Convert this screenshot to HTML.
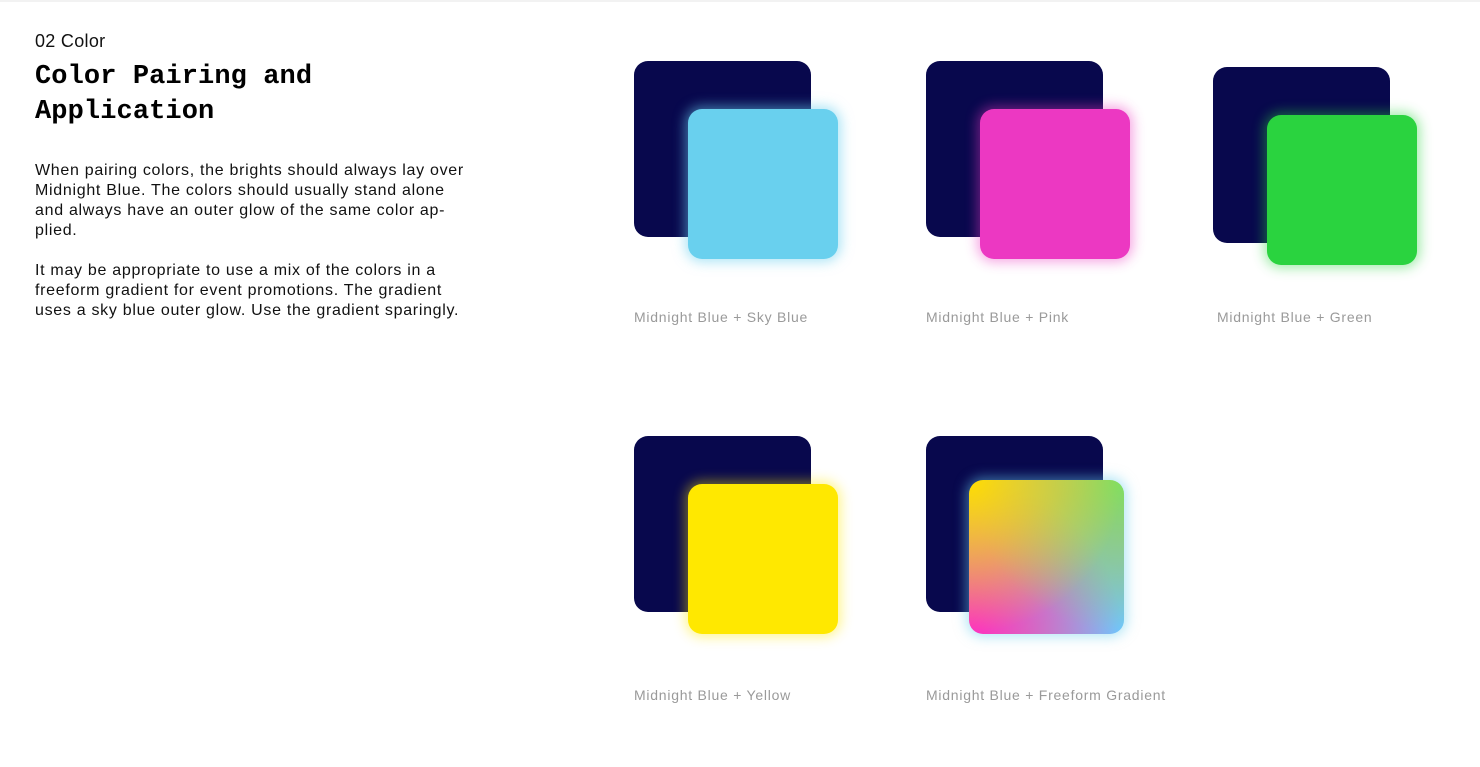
<!DOCTYPE html>
<html><head><style>
html,body{margin:0;padding:0;background:#fff;width:1480px;height:767px;overflow:hidden;position:relative;font-family:"Liberation Sans",sans-serif}
.top{position:absolute;left:0;top:0;width:1480px;height:2px;background:#f2f2f2}
.sub{position:absolute;left:35px;top:31px;font-size:18px;color:#111;letter-spacing:0.3px}
h1{position:absolute;left:35px;top:60px;margin:0;font-family:"Liberation Mono",monospace;font-weight:bold;font-size:27px;line-height:35px;color:#000;letter-spacing:0.1px}
.p{position:absolute;left:35px;white-space:nowrap;font-size:16px;line-height:20px;color:#111;letter-spacing:0.7px}
.d{position:absolute;width:177px;height:176px;border-radius:14px;background:#08084d}
.b{position:absolute;width:150px;height:150px;border-radius:14px}
.l{position:absolute;font-size:14px;color:#9a9a9a;letter-spacing:0.75px}
</style></head><body>
<div class="top"></div>
<div class="sub">02 Color</div>
<h1>Color Pairing and<br>Application</h1>
<div class="p" style="top:161px">When pairing colors, the brights should always lay over<br>Midnight Blue. The colors should usually stand alone<br>and always have an outer glow of the same color ap-<br>plied.</div>
<div class="p" style="top:261px">It may be appropriate to use a mix of the colors in a<br>freeform gradient for event promotions. The gradient<br>uses a sky blue outer glow. Use the gradient sparingly.</div>

<div class="d" style="left:634px;top:61px"></div>
<div class="b" style="left:688px;top:109px;background:#69d0ee;box-shadow:0 0 12px 3px rgba(105,208,238,.55)"></div>
<div class="l" style="left:634px;top:309px">Midnight Blue + Sky Blue</div>

<div class="d" style="left:926px;top:61px"></div>
<div class="b" style="left:980px;top:109px;background:#ec38c2;box-shadow:0 0 12px 3px rgba(236,56,194,.45)"></div>
<div class="l" style="left:926px;top:309px">Midnight Blue + Pink</div>

<div class="d" style="left:1213px;top:67px"></div>
<div class="b" style="left:1267px;top:115px;background:#2ad33f;box-shadow:0 0 12px 3px rgba(42,211,63,.45)"></div>
<div class="l" style="left:1217px;top:309px">Midnight Blue + Green</div>

<div class="d" style="left:634px;top:436px"></div>
<div class="b" style="left:688px;top:484px;background:#ffe800;box-shadow:0 0 12px 3px rgba(255,232,0,.45)"></div>
<div class="l" style="left:634px;top:687px">Midnight Blue + Yellow</div>

<div class="d" style="left:926px;top:436px"></div>
<div class="b" style="left:969px;top:480px;width:155px;height:154px;background:radial-gradient(ellipse at 0% 0%,#ffdd00 0%,rgba(255,210,20,0) 70%),radial-gradient(ellipse at 100% 0%,#7ee060 0%,rgba(126,224,96,0) 70%),radial-gradient(ellipse at 0% 100%,#ff30c0 0%,rgba(255,48,192,0) 70%),radial-gradient(ellipse at 100% 100%,#6cc8ff 0%,rgba(108,200,255,0) 70%),#c0a0a8;box-shadow:0 0 12px 3px rgba(105,208,238,.5)"></div>
<div class="l" style="left:926px;top:687px">Midnight Blue + Freeform Gradient</div>
</body></html>
